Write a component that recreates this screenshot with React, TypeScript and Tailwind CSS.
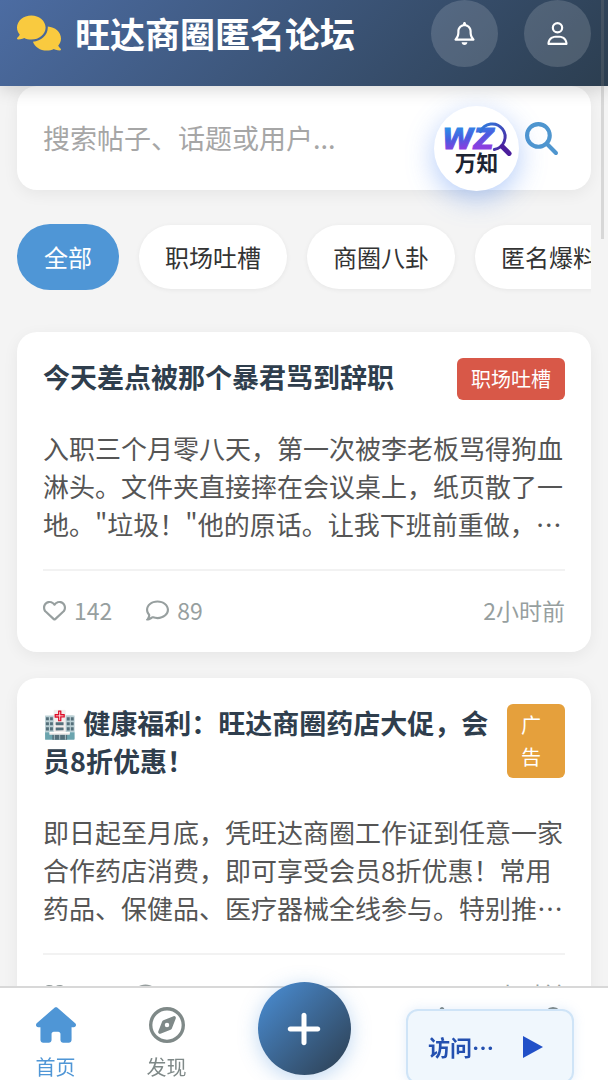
import { useState } from "react";
import {
  FaComments,
  FaHouse,
  FaMagnifyingGlass,
  FaPlus,
  FaRegBell,
  FaRegComment,
  FaRegCompass,
  FaRegHeart,
  FaRegUser,
} from "react-icons/fa6";

const categories = ["全部", "职场吐槽", "商圈八卦", "匿名爆料"];

const posts = [
  {
    id: 1,
    title: "今天差点被那个暴君骂到辞职",
    tag: "职场吐槽",
    tagClass: "bg-[#d85848] shrink-0",
    content:
      '入职三个月零八天，第一次被李老板骂得狗血淋头。文件夹直接摔在会议桌上，纸页散了一地。"垃圾！"他的原话。让我下班前重做，否则明天就不用来了。',
    likes: 142,
    comments: 89,
    time: "2小时前",
  },
  {
    id: 2,
    title: "🏥 健康福利：旺达商圈药店大促，会员8折优惠！",
    tag: "广告",
    tagClass: "bg-[#e5a03c] w-[58px] shrink-0",
    content:
      "即日起至月底，凭旺达商圈工作证到任意一家合作药店消费，即可享受会员8折优惠！常用药品、保健品、医疗器械全线参与。特别推出免费血压检测服务。",
    likes: 56,
    comments: 23,
    time: "3小时前",
  },
];

const PostCard = ({ post }) => (
  <article className="rounded-[20px] bg-white p-[26px] shadow-[0_4px_16px_rgba(0,0,0,0.06)]">
    <div className="mb-7 flex items-start justify-between gap-4">
      <h2 className="pb-[5px] text-[27px] leading-[38px] font-bold text-[#2f3e4d]">{post.title}</h2>
      <span
        className={`rounded-md px-[14px] py-[5px] text-[20px] leading-8 text-white ${post.tagClass}`}
      >
        {post.tag}
      </span>
    </div>
    <p className="line-clamp-3 text-[26px] leading-[38px] text-[#555555]">{post.content}</p>
    <div className="mt-[26px] flex items-center justify-between border-t-2 border-[#f2f2f2] pt-[23px] text-[23px] leading-8 text-[#979f9f]">
      <div className="flex gap-[34px]">
        <button type="button" aria-label="点赞" className="flex items-center gap-2">
          <FaRegHeart />
          {post.likes}
        </button>
        <button type="button" aria-label="评论" className="flex items-center gap-2">
          <FaRegComment />
          {post.comments}
        </button>
      </div>
      <time>{post.time}</time>
    </div>
  </article>
);

const WzLogo = () => (
  <svg viewBox="0 0 86 86" className="h-full w-full" aria-label="万知">
    <defs>
      <linearGradient id="wz" x1="0" y1="0" x2="0.25" y2="1">
        <stop offset="0.2" stopColor="#2b8fe8" />
        <stop offset="0.55" stopColor="#4a5be0" />
        <stop offset="0.85" stopColor="#8a3fe0" />
      </linearGradient>
      <linearGradient id="lens" x1="0" y1="0" x2="1" y2="1">
        <stop offset="0" stopColor="#2f7fe0" />
        <stop offset="1" stopColor="#4b1f9c" />
      </linearGradient>
    </defs>
    <text
      x="8"
      y="43"
      fontSize="29"
      fontWeight="700"
      fontStyle="italic"
      fontFamily="'DejaVu Sans', sans-serif"
      fill="url(#wz)"
      stroke="url(#wz)"
      strokeWidth="1"
    >
      WZ
    </text>
    <path
      d="M47 26a13 13 0 1 1 14 18"
      fill="none"
      stroke="url(#lens)"
      strokeWidth="3"
      strokeLinecap="round"
    />
    <path d="m69 41 7 7" stroke="#4b1f9c" strokeWidth="5" strokeLinecap="round" />
    <text
      x="21"
      y="66"
      fontSize="22"
      fontWeight="700"
      fontFamily="'Noto Sans CJK SC', sans-serif"
      fill="#1c2433"
    >
      万知
    </text>
  </svg>
);

const NavItem = ({ icon: Icon, label = "", name = label, active = false }) => (
  <a
    href="#"
    aria-label={name}
    className={`flex flex-1 flex-col items-center gap-2 pt-[19px] text-[20px] leading-8 ${
      active ? "text-[#4f96d6]" : "text-[#7f8988]"
    }`}
  >
    <Icon className="h-9 w-10 shrink-0" />
    {label}
  </a>
);

export default function App() {
  const [active, setActive] = useState("全部");

  return (
    <div
      lang="zh-CN"
      className="flex h-screen flex-col overflow-hidden bg-[#f4f4f4] font-['Noto_Sans_CJK_SC',sans-serif]"
    >
      <header className="relative z-10 flex shrink-0 items-start justify-between bg-linear-135 from-[#4c6ca2] to-[#2c3e50] px-[17px] pb-[19px] shadow-[0_4px_16px_rgba(0,0,0,0.15)]">
        <h1 className="flex h-[66px] items-center gap-[14px] text-[35px] font-bold text-white">
          <FaComments className="text-[44px] text-[#f9ca3f]" />
          旺达商圈匿名论坛
        </h1>
        <div className="flex gap-[26px] text-[23px] text-white">
          <button
            type="button"
            aria-label="通知"
            className="flex size-[67px] items-center justify-center rounded-full bg-white/15"
          >
            <FaRegBell />
          </button>
          <button
            type="button"
            aria-label="个人中心"
            className="flex size-[67px] items-center justify-center rounded-full bg-white/15"
          >
            <FaRegUser />
          </button>
        </div>
      </header>

      <main className="flex-1 overflow-y-auto px-[17px] pb-28 [scrollbar-width:none]">
        <form className="relative flex h-[104px] items-center rounded-[20px] bg-white px-[26px] shadow-[0_4px_16px_rgba(0,0,0,0.06)]">
          <input
            type="search"
            aria-label="搜索"
            placeholder="搜索帖子、话题或用户..."
            className="min-w-0 flex-1 text-[27px] text-[#333333] outline-none placeholder:text-[#a6a6a6]"
          />
          <button type="button" aria-label="搜索" className="mr-[7px] text-[33px] text-[#4f96cf]">
            <FaMagnifyingGlass />
          </button>
          <div className="absolute top-5 right-[72px] size-[85px] rounded-full bg-white shadow-[0_8px_28px_rgba(70,130,240,0.4)]">
            <WzLogo />
          </div>
        </form>

        <div className="mt-[26px] flex items-center gap-5 overflow-hidden py-2">
          {categories.map((name) => (
            <button
              key={name}
              type="button"
              onClick={() => setActive(name)}
              className={`shrink-0 rounded-full text-[24px] leading-8 ${
                active === name
                  ? "bg-[#4f96d6] px-[27px] py-[17px] text-white"
                  : "bg-white px-[26px] py-4 text-[#333333] shadow-[0_1px_5px_rgba(0,0,0,0.06)]"
              }`}
            >
              {name}
            </button>
          ))}
        </div>

        <div className="mt-[34px] flex flex-col gap-[26px]">
          {posts.map((post) => (
            <PostCard key={post.id} post={post} />
          ))}
        </div>
      </main>

      <nav className="fixed inset-x-0 bottom-0 z-20 flex h-[94px] border-t-2 border-[#d8d8d8] bg-white">
        <NavItem icon={FaHouse} label="首页" active />
        <NavItem icon={FaRegCompass} label="发现" />
        <div className="flex w-[164px] justify-center">
          <button
            type="button"
            aria-label="发帖"
            className="-mt-[6px] flex size-[93px] items-center justify-center rounded-full bg-linear-135 from-[#4a90d9] to-[#2c3e50] text-[40px] text-white shadow-[0_4px_20px_rgba(74,144,217,0.35)]"
          >
            <FaPlus />
          </button>
        </div>
        <NavItem icon={FaRegBell} name="消息" />
        <NavItem icon={FaRegUser} name="我的" />
      </nav>

      <button
        type="button"
        className="fixed right-[34px] -bottom-1 z-30 flex h-[75px] w-[168px] items-center justify-between rounded-xl border-2 border-[#cfe4f7] bg-[#f0f7fd] px-5 text-[22px] font-bold text-[#2450b0] shadow-[0_0_12px_rgba(120,170,230,0.2)]"
      >
        访问…
        <svg viewBox="0 0 20 22" className="mr-[9px] h-[22px] w-5" fill="#2150c8">
          <path d="M0 0 20 11 0 22Z" />
        </svg>
      </button>

      <div className="fixed top-0 right-1 z-40 h-[239px] w-[3px] bg-[#808080]/25" />
    </div>
  );
}
